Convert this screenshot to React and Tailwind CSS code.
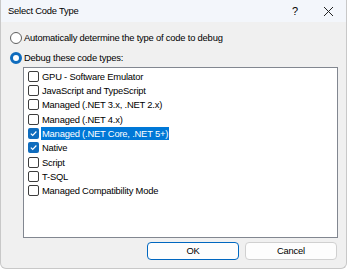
import React from 'react';

const ITEMS = [
  { label: 'GPU - Software Emulator', checked: false },
  { label: 'JavaScript and TypeScript', checked: false },
  { label: 'Managed (.NET 3.x, .NET 2.x)', checked: false },
  { label: 'Managed (.NET 4.x)', checked: false },
  { label: 'Managed (.NET Core, .NET 5+)', checked: true, selected: true },
  { label: 'Native', checked: true },
  { label: 'Script', checked: false },
  { label: 'T-SQL', checked: false },
  { label: 'Managed Compatibility Mode', checked: false },
];

function Radio({ on }) {
  if (on) {
    return (
      <span className="w-3 h-3 rounded-full border-[3.5px] border-[#0f6cbd] bg-white shrink-0" />
    );
  }
  return <span className="w-3 h-3 rounded-full border border-[#5f5f5f] bg-white shrink-0" />;
}

function Check({ on }) {
  if (on) {
    return (
      <span className="w-[11px] h-[11px] rounded-[2px] bg-[#0f6cbd] flex items-center justify-center shrink-0">
        <svg width="9" height="9" viewBox="0 0 10 10">
          <path d="M2 5.2 L4.1 7.2 L8.2 2.8" fill="none" stroke="#fff" strokeWidth="1.3" />
        </svg>
      </span>
    );
  }
  return <span className="w-[11px] h-[11px] rounded-[2px] border border-[#3c3c3c] bg-white shrink-0" />;
}

export default function App() {
  return (
    <div
      className="w-[347px] h-[269px] flex flex-col bg-[#f0f0f0] border-x border-b border-[#c8c8c8] rounded-b-[6px] overflow-hidden text-[9.4px] tracking-[-0.2px] text-black"
      style={{ fontFamily: '"Liberation Sans", Arial, sans-serif' }}
    >
      {/* Title bar */}
      <div className="h-[22px] bg-[#f3f6fb] flex items-center shrink-0">
        <span className="pl-[7px] flex-1">Select Code Type</span>
        <span className="w-[12px] text-center mr-[22px] text-[11px]">?</span>
        <svg width="11" height="11" viewBox="0 0 11 11" className="mr-[12px]">
          <path d="M1 1 L10 10 M10 1 L1 10" stroke="#222" strokeWidth="1" />
        </svg>
      </div>

      <div className="flex flex-col pl-[9px] pt-[10px]">
        <div className="flex items-center gap-[1px] h-[12px]">
          <Radio />
          <span className="pl-[1px]">Automatically determine the type of code to debug</span>
        </div>
        <div className="flex items-center gap-[1px] h-[12px] mt-[8px]">
          <Radio on />
          <span className="pl-[1px]">Debug these code types:</span>
        </div>
      </div>

      <div className="ml-[22px] mr-[8px] mt-[3px] h-[171px] bg-white border border-[#828790] pt-[1px] pl-[4px]">
        {ITEMS.map((it) => (
          <div key={it.label} className="flex items-center h-[14.35px]">
            <Check on={it.checked} />
            <span
              className={
                'ml-[2px] px-[1px] leading-[13px] ' +
                (it.selected ? 'bg-[#0078d7] text-white' : '')
              }
            >
              {it.label}
            </span>
          </div>
        ))}
      </div>

      <div className="flex justify-end gap-[6px] mr-[9px] mt-[4px]">
        <button className="w-[92px] h-[18px] rounded-[4px] border border-[#0067c0] bg-[#fdfdfd] leading-none">
          OK
        </button>
        <button className="w-[92px] h-[18px] rounded-[4px] border border-[#d0d0d0] bg-[#fdfdfd] leading-none">
          Cancel
        </button>
      </div>
    </div>
  );
}
